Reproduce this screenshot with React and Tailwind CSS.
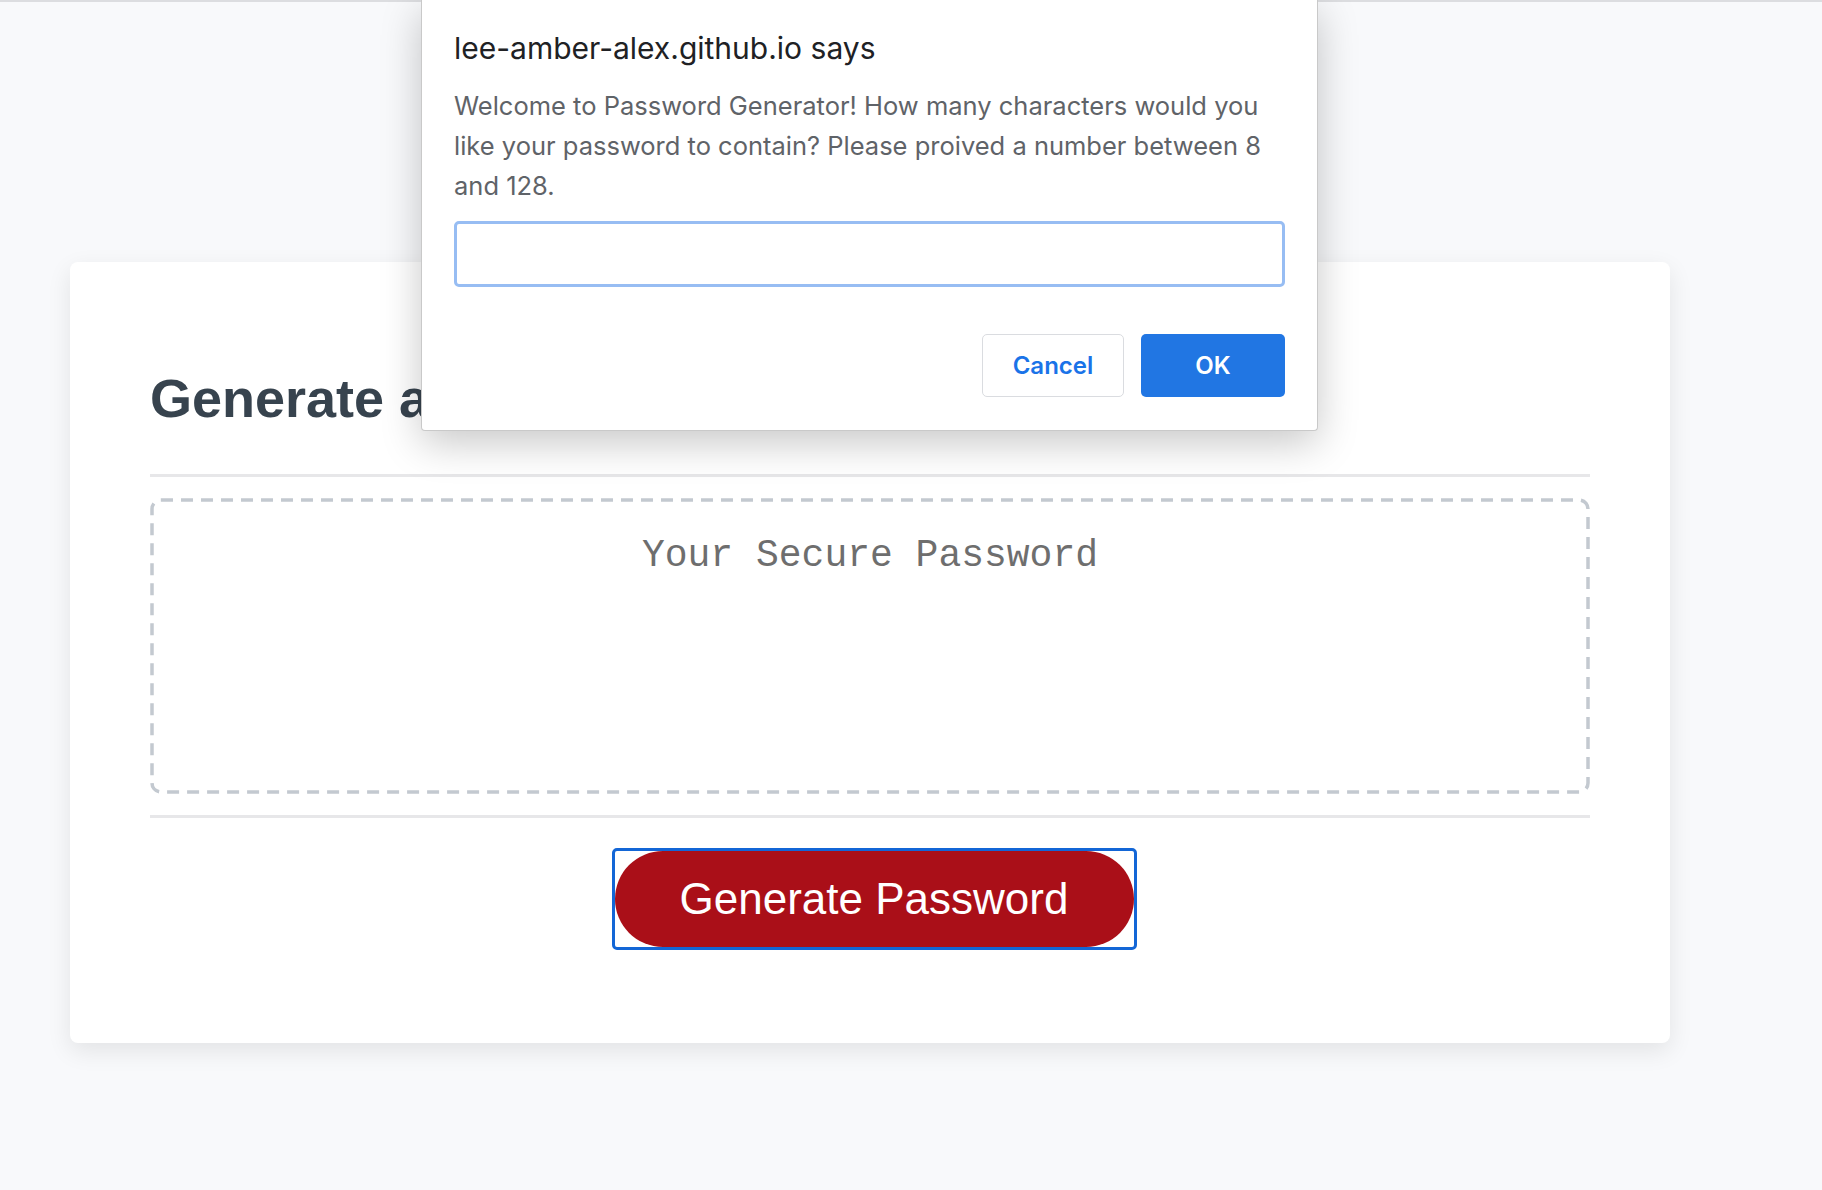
import React from "react";

export default function App() {
  return (
    <div className="relative min-h-[1190px] w-full bg-[#f8f9fb]">
      {/* browser chrome edge */}
      <div className="h-[2px] w-full bg-[#dcdde0]" />

      {/* Page card */}
      <div className="px-[70px] pt-[260px]">
        <div
          className="w-[1600px] rounded-[8px] bg-white px-[80px] pt-[105px] pb-[93px] shadow-[0_8px_24px_rgba(0,0,0,0.09)]"
          style={{ fontFamily: '"Liberation Sans", Arial, sans-serif' }}
        >
          <h2 className="text-[54px] font-bold leading-[62px] text-[#37434e]">
            Generate a Password
          </h2>

          <div className="mt-[45px] h-[3px] w-full bg-[#e7e7e9]" />

          {/* password output box, dashed outline */}
          <div className="relative mt-[21px] h-[296px] pt-[34px] text-center">
            <svg className="absolute inset-0" width="1440" height="296" viewBox="0 0 1440 296">
              <rect
                x="2"
                y="2"
                width="1436"
                height="292"
                rx="9"
                fill="none"
                stroke="#c3c9d0"
                strokeWidth="3.5"
                strokeDasharray="12 8"
              />
            </svg>
            <span
              className="relative text-[38px] leading-[48px] text-[#6e6e6e]"
              style={{ fontFamily: '"Liberation Mono", "Courier New", monospace' }}
            >
              Your Secure Password
            </span>
          </div>

          <div className="mt-[21px] h-[3px] w-full bg-[#e7e7e9]" />

          <div className="mt-[30px] flex justify-center pl-[8px]">
            <div className="rounded-[5px] border-[3px] border-[#1366d6]">
              <button className="flex h-[96px] w-[519px] items-center justify-center rounded-full bg-[#aa0f18] text-[44px] text-white">
                Generate Password
              </button>
            </div>
          </div>
        </div>
      </div>

      {/* Browser prompt dialog */}
      <div
        className="absolute left-[421px] top-0 w-[897px] rounded-b-[4px] border border-t-0 border-[#c9c9c9] bg-white px-[32px] pt-[30px] pb-[33px] shadow-[0_12px_40px_rgba(0,0,0,0.22)]"
        style={{ fontFamily: 'Inter, "Noto Sans", sans-serif' }}
      >
        <div className="text-[30px] leading-[36px] text-[#202124]">
          lee-amber-alex.github.io says
        </div>
        <p className="mt-[20px] text-[25.5px] leading-[40px] text-[#5f6368]">
          Welcome to Password Generator! How many characters would you like your password to contain? Please proived a number between 8 and 128.
        </p>
        <div className="mt-[15px] h-[66px] w-full rounded-[5px] border-[3px] border-[#97bdf3] bg-white" />
        <div className="mt-[47px] flex justify-end gap-[17px]">
          <button className="h-[63px] w-[142px] rounded-[5px] border border-[#dadce0] bg-white text-[24px] font-semibold text-[#1a73e8]">
            Cancel
          </button>
          <button className="h-[63px] w-[144px] rounded-[5px] bg-[#2176e3] text-[24px] font-semibold text-white">
            OK
          </button>
        </div>
      </div>
    </div>
  );
}
